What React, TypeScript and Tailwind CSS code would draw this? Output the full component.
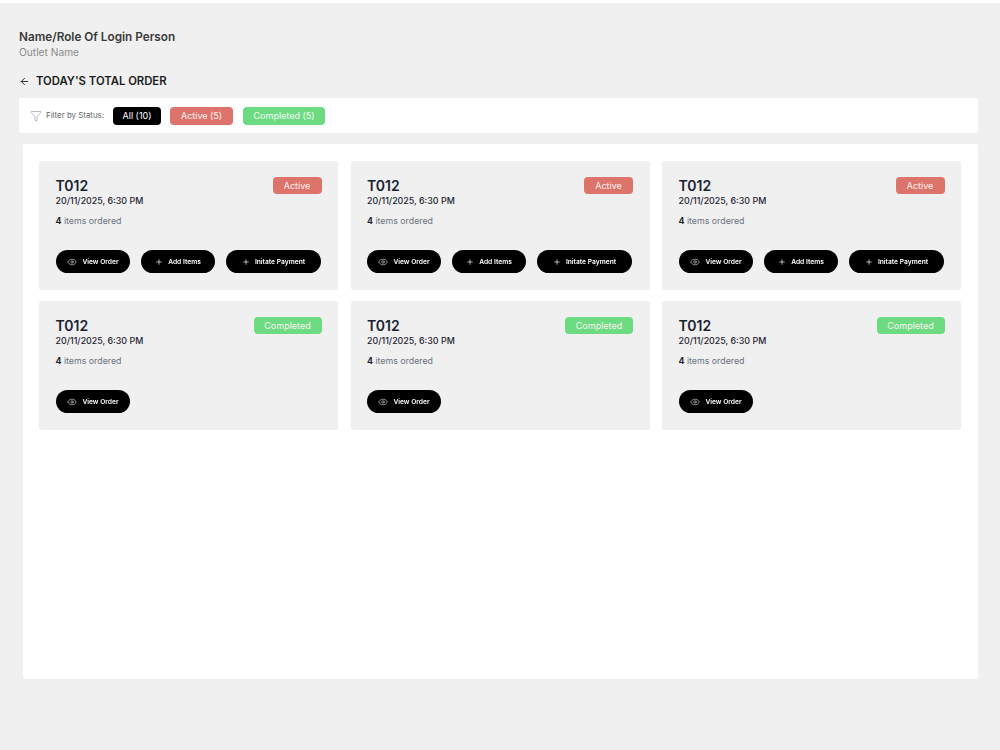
import { ArrowLeft, Eye, Funnel, Plus } from "lucide-react";

type Status = "Active" | "Completed";

function ActionButton({ kind, label, width }: { kind: "eye" | "plus"; label: string; width: string }) {
  return (
    <button className={`flex h-[23px] items-center justify-center gap-[5px] rounded-full bg-black text-[6.7px] font-semibold text-white will-change-transform ${width}`}>
      {kind === "eye" ? <Eye size={10} strokeWidth={1.25} /> : <Plus size={8} strokeWidth={2} />}
      <span className="pt-[1px]">{label}</span>
    </button>
  );
}

function OrderCard({ status }: { status: Status }) {
  return (
    <div className="flex h-[129px] flex-col rounded-[2px] bg-[#f0f0f0] px-[16.5px] pt-[16px]">
      <div className="flex items-start justify-between">
        <div>
          <div className="text-[14px] leading-[17px] font-semibold text-[#1a2230]">T012</div>
          <div className="mt-[1px] text-[8.9px] leading-[12px] font-medium text-[#1f2430]">20/11/2025, 6:30 PM</div>
        </div>
        <span
          className={`flex h-[17px] items-center justify-center rounded-[4px] text-[9px] text-[#fdf3f1] ${
            status === "Active" ? "w-[49px] bg-[#dd746c]" : "w-[68px] bg-[#6ddb82]"
          }`}
        >
          {status}
        </span>
      </div>
      <div className="mt-[8px] text-[8.8px] leading-[11px] text-[#6b7280]">
        <span className="font-bold text-[#1f2430]">4</span> items ordered
      </div>
      <div className="mt-[24px] flex gap-[11px]">
        <ActionButton kind="eye" label="View Order" width="w-[74px]" />
        {status === "Active" && <ActionButton kind="plus" label="Add Items" width="w-[74px]" />}
        {status === "Active" && <ActionButton kind="plus" label="Initate Payment" width="w-[95px]" />}
      </div>
    </div>
  );
}

export default function App() {
  const statuses: Status[] = ["Active", "Active", "Active", "Completed", "Completed", "Completed"];
  return (
    <div className="h-[750px] w-[1000px] bg-[#f0f0f0] font-['Inter',sans-serif]">
      <div className="h-[3px] bg-white" />
      <div className="pt-[27px] pr-[22px] pl-[19px]">
        <div className="text-[11.75px] leading-[15px] font-semibold text-[#3a3a3a]">Name/Role Of Login Person</div>
        <div className="mt-[1px] text-[10.2px] leading-[13px] text-[#8a8a8a]">Outlet Name</div>
        <div className="mt-[15px] flex items-center gap-[6px]">
          <ArrowLeft size={11} strokeWidth={2} className="text-[#222222]" />
          <span className="text-[11.3px] leading-[14px] font-semibold text-[#1c1c1c]">TODAY'S TOTAL ORDER</span>
        </div>
        <div className="mt-[10px] flex h-[35px] items-center rounded-[2px] bg-white pl-[11px]">
          <Funnel size={12} strokeWidth={1} className="text-[#777777]" />
          <span className="ml-[4px] text-[7.9px] text-[#666666]">Filter by Status:</span>
          <span className="ml-[9px] flex h-[18px] w-[48px] items-center justify-center rounded-[4px] bg-black text-[9px] text-white">All (10)</span>
          <span className="ml-[9px] flex h-[18px] w-[63px] items-center justify-center rounded-[4px] bg-[#dd746c] text-[9px] text-[#fdf3f1]">Active (5)</span>
          <span className="ml-[10px] flex h-[18px] w-[82px] items-center justify-center rounded-[4px] bg-[#6ddb82] text-[9px] text-[#f3fdf5]">Completed (5)</span>
        </div>
        <div className="mt-[11px] ml-[4px] h-[535px] rounded-[2px] bg-white pt-[17px] pr-[17px] pl-[16px]">
          <div className="grid grid-cols-3 gap-x-[12.5px] gap-y-[11px]">
            {statuses.map((status, i) => (
              <OrderCard key={i} status={status} />
            ))}
          </div>
        </div>
      </div>
    </div>
  );
}
